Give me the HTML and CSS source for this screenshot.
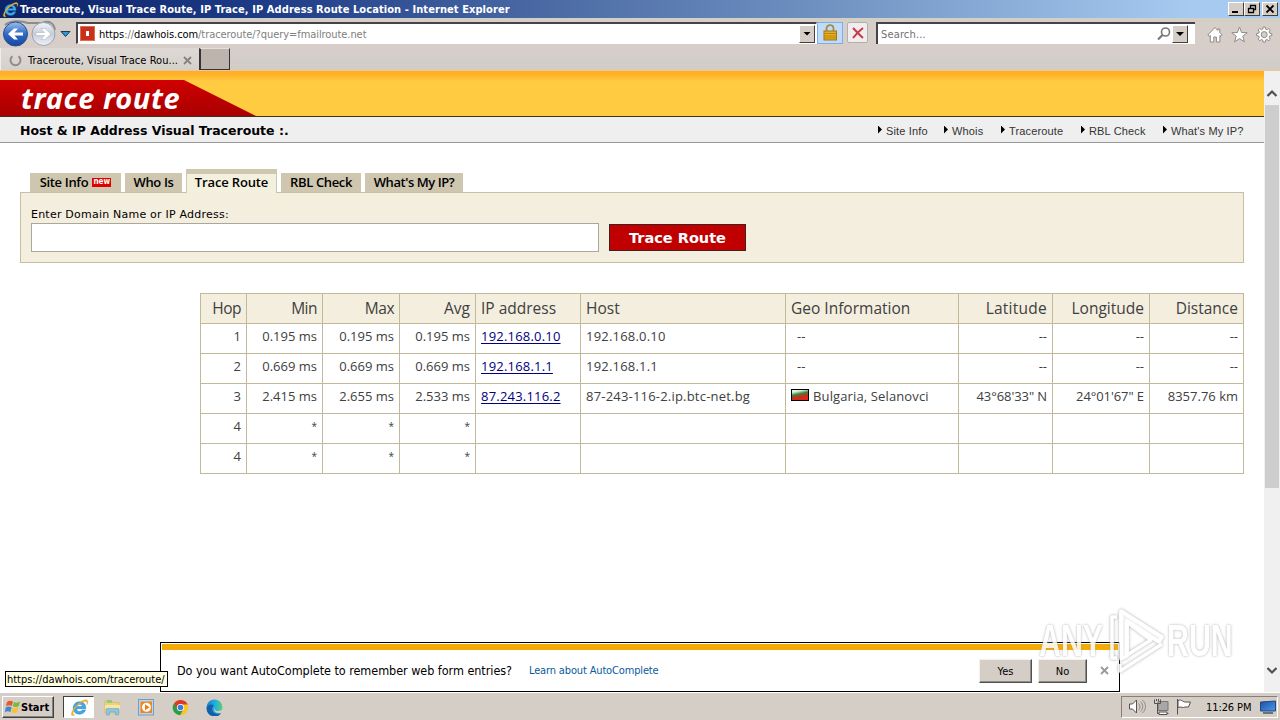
FILE: index.html
```html
<!DOCTYPE html>
<html lang="en">
<head>
<meta charset="utf-8">
<title>Traceroute, Visual Trace Route, IP Trace, IP Address Route Location</title>
<link rel="stylesheet" href="styles.css">
</head>
<body>
<svg width="0" height="0" class="defs">
  <defs>
    <linearGradient id="blueBall" x1="0" y1="0" x2="0" y2="1"><stop offset="0" stop-color="#9cc0ee"/><stop offset=".5" stop-color="#2f68c4"/><stop offset="1" stop-color="#1747a0"/></linearGradient>
    <linearGradient id="greyBall" x1="0" y1="0" x2="0" y2="1"><stop offset="0" stop-color="#f4f6fa"/><stop offset=".5" stop-color="#c6cbd8"/><stop offset="1" stop-color="#eef2fa"/></linearGradient>
    <linearGradient id="edgeFill" x1="0" y1="0" x2="1" y2="0"><stop offset="0" stop-color="#1280c8"/><stop offset=".6" stop-color="#27b4dc"/><stop offset="1" stop-color="#5fd069"/></linearGradient>
    <linearGradient id="flagFill" x1="0" y1="0" x2="0.35" y2="1"><stop offset="0" stop-color="#f4f4f4"/><stop offset=".25" stop-color="#dfeade"/><stop offset=".5" stop-color="#2f8a3c"/><stop offset=".72" stop-color="#c8301c"/><stop offset="1" stop-color="#d8281c"/></linearGradient>
    <linearGradient id="screenFill" x1="0" y1="0" x2="1" y2="1"><stop offset="0" stop-color="#1c4fa8"/><stop offset="1" stop-color="#4a9ae8"/></linearGradient>
    <symbol id="ie" viewBox="0 0 20 20">
      <path d="M16.600 11.200H6.800c.2 2 1.600 3 3.400 3 1.300 0 2.200-.5 2.700-1.500h3.400c-.9 2.800-3.200 4.300-6.200 4.300-4 0-6.700-2.500-6.700-6.400S6.200 4 10.100 4c4.100 0 6.700 2.700 6.500 7.200zM13.100 8.900C12.900 7.400 11.800 6.600 10.200 6.600S7.200 7.400 6.900 8.900z" fill="#3fa9ea" stroke="#1d74b8" stroke-width=".5"/>
      <path d="M5 17.800C1 20 .4 16.500 3.400 12 7 6.200 14.500.6 17.800 2c1.600.7 1.200 3-.2 5.200.6-2 .4-3.300-.8-3.600C13.600 3 8 7.200 5 11.800c-2 3-2.400 5.600 0 6z" fill="#f0b832" stroke="#c98a18" stroke-width=".3"/>
    </symbol>
  </defs>
</svg>

<header class="titlebar">
  <svg class="title-icon" width="17" height="17"><use href="#ie"/></svg>
  <span class="title-text">Traceroute, Visual Trace Route, IP Trace, IP Address Route Location - Internet Explorer</span>
  <div class="window-buttons">
    <span class="winbtn"><svg width="12" height="10"><path d="M2 8h6" stroke="#000" stroke-width="2"/></svg></span>
    <span class="winbtn"><svg width="12" height="10"><path d="M4.500 4V1.500h5v4H7.500M4 1.500h6M2.500 4.500h5v4h-5zM2 4.500h6" fill="none" stroke="#000" stroke-width="1.300"/></svg></span>
    <span class="winbtn close"><svg width="12" height="10"><path d="M2.500 1.500l7 7M9.500 1.500l-7 7" stroke="#000" stroke-width="1.800"/></svg></span>
  </div>
</header>

<nav class="navbar">
  <svg class="nav-arrows" width="76" height="28" viewBox="0 0 76 28">
    <path d="M5 6C10 1 21 1.500 28 4h14c7-3 12 0 13 7" fill="none" stroke="#8b8b91" stroke-width="2"/>
    <circle cx="15.500" cy="15" r="12" fill="url(#blueBall)" stroke="#284f8c" stroke-width="1"/>
    <path d="M23 13.500v3h-8.500l3.500 4h-4l-6-5.500 6-5.500h4l-3.500 4z" fill="#fff"/>
    <circle cx="43.500" cy="15" r="11.500" fill="url(#greyBall)" stroke="#9da1aa" stroke-width="1"/>
    <path d="M36 13.500v3h8.500l-3.500 4h4l6-5.500-6-5.500h-4l3.500 4z" fill="#fff" stroke="#b4b8c0" stroke-width=".6"/>
    <path d="M61 12.500h9l-4.500 5z" fill="#2e9ad2" stroke="#173c5a" stroke-width="1"/>
  </svg>
  <div class="address">
    <svg width="15" height="15"><rect width="15" height="15" fill="#c9301c"/><rect x=".5" y=".5" width="14" height="14" fill="none" stroke="#e06c4a"/><rect x="6" y="5" width="3" height="5" fill="#fff"/></svg>
    <span class="url"><b>https</b>://<b>dawhois.com</b>/traceroute/?query=fmailroute.net</span>
    <span class="dropbtn"><i></i></span>
  </div>
  <span class="lockbtn"><svg width="14" height="17"><path d="M3.500 8V4.500c0-4.500 7-4.500 7 0V8" fill="none" stroke="#a08c4c" stroke-width="1.800"/><rect x="1" y="7" width="12.500" height="9" fill="#e8b020" stroke="#9b7417"/><path d="M1.500 9.500h12M1.500 12h12M1.500 14h12" stroke="#b98512"/></svg></span>
  <span class="stopbtn"><svg width="12" height="12"><path d="M1 1c3 3 6 6.500 10 10M11 1C7 4 4 7 1 11" stroke="#c43c46" stroke-width="2" fill="none"/></svg></span>
  <div class="search">
    <span class="search-text">Search...</span>
    <svg width="14" height="14"><circle cx="8.500" cy="5" r="4" fill="none" stroke="#777" stroke-width="1.600"/><path d="M5.500 8L1 12.500" stroke="#777" stroke-width="2.200"/></svg>
    <span class="dropbtn"><i></i></span>
  </div>
  <svg class="tools" width="66" height="18" viewBox="0 0 66 18">
    <g fill="#fff" stroke="#8d8a88" stroke-width="1">
      <path d="M8 1.500L.8 9l1.400 1.300L3.300 9.500V16h3.500v-5h2.600v5h3.500V9.500l1.100.8L15.200 9l-2.400-2.500V3h-2v1.500z"/>
      <path d="M32.500 1l2.100 5.500 5.600.2-4.400 3.500 1.600 5.600-4.900-3.200-4.900 3.200 1.600-5.600-4.400-3.500 5.600-.2z"/>
      <path d="M56.200 1h2l.5 2.200 1.200.5 2-1.200 1.400 1.400-1.200 2 .5 1.200 2.200.5v2l-2.200.5-.5 1.200 1.200 2-1.400 1.400-2-1.200-1.200.5-.5 2.200h-2l-.5-2.200-1.200-.5-2 1.200-1.400-1.400 1.200-2-.5-1.200-2.200-.5v-2l2.200-.5.5-1.200-1.200-2 1.400-1.400 2 1.200 1.200-.5z"/>
      <circle cx="57.200" cy="8.600" r="3" fill="#d5cec9"/>
    </g>
  </svg>
</nav>

<div class="tabstrip">
  <div class="browser-tab">
    <svg width="13" height="13"><path d="M3.500 2.200a5 5 0 1 0 6 0" fill="none" stroke="#8e8c8a" stroke-width="2"/></svg>
    <span class="tab-title">Traceroute, Visual Trace Rou...</span>
    <svg class="tab-x" width="9" height="9"><path d="M1 1l7 7M8 1L1 8" stroke="#858280" stroke-width="1.800"/></svg>
  </div>
  <div class="new-tab"></div>
</div>

<div class="viewport">
  <main class="page">
    <div class="banner">
      <div class="logo"><span>trace route</span></div>
    </div>
    <div class="subhead">
      <h1>Host &amp; IP Address Visual Traceroute :.</h1>
      <ul class="links">
        <li class="l1">Site Info</li><li class="l2">Whois</li><li class="l3">Traceroute</li><li class="l4">RBL Check</li><li class="l5">What's My IP?</li>
      </ul>
    </div>
    <div class="site-tabs">
      <div class="stab t1"><span>Site Info</span><em>new</em></div>
      <div class="stab t2"><span>Who Is</span></div>
      <div class="stab t3 active"><span>Trace Route</span></div>
      <div class="stab t4"><span>RBL Check</span></div>
      <div class="stab t5"><span>What's My IP?</span></div>
    </div>
    <form class="panel">
      <label>Enter Domain Name or IP Address:</label>
      <div class="panel-row">
        <div class="field"></div>
        <div class="submit">Trace Route</div>
      </div>
    </form>
    <table class="hops">
      <colgroup><col class="c46"><col class="c76"><col class="c77"><col class="c76"><col class="c105"><col class="c205"><col class="c173"><col class="c94"><col class="c97"><col class="c94"></colgroup>
      <thead><tr><th class="r tight">Hop</th><th class="r tight">Min</th><th class="r tight">Max</th><th class="r">Avg</th><th>IP address</th><th>Host</th><th>Geo Information</th><th class="r wide">Latitude</th><th class="r">Longitude</th><th class="r">Distance</th></tr></thead>
      <tbody>
        <tr><td class="r">1</td><td class="r">0.195 ms</td><td class="r">0.195 ms</td><td class="r">0.195 ms</td><td class="name"><a>192.168.0.10</a></td><td class="name">192.168.0.10</td><td class="dash">--</td><td class="r">--</td><td class="r">--</td><td class="r">--</td></tr>
        <tr><td class="r">2</td><td class="r">0.669 ms</td><td class="r">0.669 ms</td><td class="r">0.669 ms</td><td class="name"><a>192.168.1.1</a></td><td class="name">192.168.1.1</td><td class="dash">--</td><td class="r">--</td><td class="r">--</td><td class="r">--</td></tr>
        <tr><td class="r">3</td><td class="r">2.415 ms</td><td class="r">2.655 ms</td><td class="r">2.533 ms</td><td class="name"><a>87.243.116.2</a></td><td class="name">87-243-116-2.ip.btc-net.bg</td><td><svg class="flag" width="18" height="12"><rect x=".5" y=".5" width="17" height="11" fill="url(#flagFill)" stroke="#000"/></svg><span class="geo">Bulgaria, Selanovci</span></td><td class="r coord">43°68'33" N</td><td class="r coord">24°01'67" E</td><td class="r">8357.76 km</td></tr>
        <tr><td class="r">4</td><td class="r star">*</td><td class="r star">*</td><td class="r star">*</td><td></td><td></td><td></td><td></td><td></td><td></td></tr>
        <tr><td class="r">4</td><td class="r star">*</td><td class="r star">*</td><td class="r star">*</td><td></td><td></td><td></td><td></td><td></td><td></td></tr>
      </tbody>
    </table>
  </main>
  <aside class="scrollbar">
    <svg width="16" height="34"><path d="M3.500 25l4.500-4.500 4.500 4.500" fill="none" stroke="#505050" stroke-width="2.200"/></svg>
    <div class="thumb"></div>
    <svg class="down" width="16" height="30"><path d="M3.500 6l4.500 4.500L12.500 6" fill="none" stroke="#505050" stroke-width="2.200"/></svg>
  </aside>
  <div class="notice">
    <div class="notice-bar"></div>
    <div class="notice-row">
      <span class="question">Do you want AutoComplete to remember web form entries?</span>
      <span class="learn">Learn about AutoComplete</span>
      <span class="btn yes">Yes</span>
      <span class="btn no">No</span>
      <svg class="dismiss" width="9" height="9"><path d="M1 1l7 7M8 1L1 8" stroke="#999" stroke-width="1.800"/></svg>
    </div>
  </div>
  <div class="status-tip"><span>https://dawhois.com/traceroute/</span></div>
  <div class="watermark">
    <span class="wm-any">ANY</span>
    <svg width="60" height="70" viewBox="0 0 60 70"><g class="wm-mark" fill="none" stroke="#fff" stroke-width="3.500" stroke-linejoin="round"><path d="M14 5l41 26-3 5L20 15v35l-6 3z" fill="#f0f0f0"/><path d="M10 11H5v41h5M14 5v47M14 5l41 26M20 16v33l24-15zM13 58v7l42-27"/></g></svg>
    <span class="wm-run">RUN</span>
  </div>
</div>

<footer class="taskbar">
  <div class="start"><svg width="16" height="16" viewBox="0 0 16 16"><path d="M2 3c2-2 4-1.500 6-.5L6.800 7C5 6 3 6 1 7.300z" fill="#e8582a"/><path d="M9 3c2 1 4 1 6-.7L13.800 7c-2 1.500-4 1-6 .2z" fill="#7cb83c"/><path d="M.8 8.500c2-1.500 4-1.300 5.800-.3L5.400 13c-2-1-4-1-5.600.4z" fill="#3d86d8"/><path d="M7.500 8.500c2 1 4 1 6-.5l-1.200 5c-2 1.500-4 1.200-6 .2z" fill="#f8c22c"/></svg><span>Start</span></div>
  <div class="task-active"><svg width="19" height="19"><use href="#ie"/></svg></div>
  <div class="quick">
    <svg width="17" height="17" viewBox="0 0 17 17"><path d="M1 2h5l1 1.500h8V14H1z" fill="#f0d27a" stroke="#d8b050" stroke-width=".6"/><path d="M3 1h5v3H3z" fill="#8fcb7a"/><path d="M1 6h15v4H1z" fill="#f8e6a4"/><path d="M2.500 16V9.500h12V16h-3v-3h-6v3z" fill="#8cc4e4" stroke="#5a9cc4" stroke-width=".5"/></svg>
    <svg width="17" height="17" viewBox="0 0 17 17"><rect x=".5" y=".5" width="15" height="15.500" fill="#b8d4ee" stroke="#6f9dc8"/><rect x="2.500" y="2.500" width="11.500" height="11.500" fill="#f5851a"/><circle cx="8.500" cy="8.300" r="4.500" fill="#fff"/><path d="M7 5.300v6l4.500-3z" fill="#f07810"/></svg>
    <svg width="17" height="17" viewBox="0 0 17 17"><circle cx="8.500" cy="8.500" r="7.800" fill="#f9c623"/><path d="M8.500 8.500L1.700 4.700A7.800 7.800 0 0 0 8 16.300l3.500-6z" fill="#2e9c4a"/><path d="M2 4.500l4.500 6L8 5.500h7.700A7.800 7.800 0 0 0 2 4.500z" fill="#dc3a2c"/><circle cx="8.500" cy="8.500" r="3.600" fill="#fff"/><circle cx="8.500" cy="8.500" r="2.800" fill="#3a7be0"/></svg>
    <svg width="17" height="17" viewBox="0 0 17 17"><circle cx="8.500" cy="8.500" r="8" fill="url(#edgeFill)"/><path d="M.6 9.500C1 6 5 4.500 8 6.500c-3 2-2.600 8 3.500 8.200 2 0 3-.6 4-1.200A8 8 0 0 1 .6 9.500z" fill="#135fae"/><path d="M9 8c-1.500 2 0 4 3 4 2 0 3.500-.8 4.500-2L17 13l-2 1c-4 1-8-1.500-6.800-5z" fill="#d5cec6"/></svg>
  </div>
  <div class="tray">
    <svg width="66" height="18" viewBox="0 0 66 18">
      <g fill="#fff" stroke="#55524f" stroke-width="1">
        <path d="M1.500 6h3l4-4v13l-4-4h-3z"/><path d="M10.500 5.500c2 2 2 4.500 0 6.500M12.500 3.500c3 3 3 7 0 10M14.500 2c4 4 4 9 0 13" fill="none" stroke="#8c8986"/>
        <path d="M30 3.500h10v9H30z" fill="#a9a7a5" stroke="#777"/><path d="M26.500 1.500v4h6v-4M28.500 1v2M30.500 1v2M29.500 6v9.500h11" fill="none"/><path d="M31 14h8v2.500h-8z"/>
        <path d="M49.500 1v15.500M50 2.500c4-1.500 5 2 8 1.500h4.500l-2 5H57c-2 1.500-4-1-7 .5z"/>
      </g>
    </svg>
    <span class="clock">11:26 PM</span>
    <svg width="16" height="14" viewBox="0 0 16 14"><path d="M.5 2l15-1v10H.5z" fill="url(#screenFill)" stroke="#26477c"/><path d="M3 13h10" stroke="#456" stroke-width="1.500"/></svg>
  </div>
</footer>
</body>
</html>
```
FILE: styles.css
```css
* { box-sizing: border-box; }
body {
  margin: 0; width: 1280px; height: 720px; overflow: hidden;
  display: flex; flex-direction: column; background: #d5cec9;
  font-family: "DejaVu Sans Condensed", "DejaVu Sans", sans-serif; font-stretch: condensed; font-size: 11px;
  white-space: nowrap; color: #000;
}
svg { display: block; flex: none; }
span { flex: none; }
.defs { position: absolute; }

.titlebar { height: 18px; flex: none; display: flex; align-items: center; padding: 0 2px 0 2px; background: linear-gradient(90deg, #0c2368 0, #1c3a86 20%, #4a69a4 42%, #7093c2 65%, #a6caf0 93%); }
.title-text { margin-left: 1px; color: #fff; font-weight: bold; font-size: 11px; letter-spacing: 0.08px; }
.window-buttons { margin-left: auto; display: flex; }
.winbtn { width: 16px; height: 14px; background: #d5cec6; border: 1px solid; border-color: #fff #404040 #404040 #fff; padding: 1px; }
.winbtn.close { margin-left: 2px; }

.navbar { height: 30px; flex: none; display: flex; background: linear-gradient(#d2cfc4, #d7cec9 8px); }
.nav-arrows { margin-top: 1px; }
.address { width: 741px; height: 22px; margin-top: 4px; background: #fff; border: 1px solid #fff; border-top: 2px solid #48404a; border-left: 2px solid #48404a; display: flex; align-items: center; padding-left: 2px; }
.url { margin: 2px 0 0 4px; color: #808080; letter-spacing: -0.07px; }
.url b { color: #000; font-weight: normal; }
.dropbtn { margin-left: auto; width: 16px; height: 18px; background: #d5cec6; border: 1px solid; border-color: #fff #404040 #404040 #fff; padding: 6px 0 0 3px; }
.address .dropbtn { margin-right: 1px; }
.dropbtn i { display: block; width: 8px; height: 4px; background: #000; clip-path: polygon(0 0, 100% 0, 50% 100%); }
.lockbtn { width: 26px; height: 22px; margin: 4px 0 0 0; background: #c2dcf8; border: 1px solid #7caeee; padding: 1px 0 0 5px; }
.stopbtn { width: 21px; height: 21px; margin: 4px 0 0 4px; background: #f1edee; border: 1px solid #b4aeae; border-radius: 2px; padding: 4px 0 0 4px; }
.search { width: 319px; height: 22px; margin: 4px 0 0 8px; background: #fff; border-top: 2px solid #48404a; border-left: 2px solid #48404a; display: flex; align-items: center; padding-right: 7px; }
.search-text { margin-left: 3px; color: #707070; flex: 1; letter-spacing: 0.15px; }
.search .dropbtn { margin-left: 1px; }
.tools { margin: 8px 0 0 12px; }

.tabstrip { height: 23px; flex: none; display: flex; background: linear-gradient(#d7cdc9, #d0cdc8 20px, #e6c9a4 22px); }
.browser-tab { width: 199px; height: 22px; display: flex; align-items: center; padding: 2px 0 0 8px; background: linear-gradient(#ded9d4, #d6d0cb); border-left: 1px solid #eee; }
.tab-title { margin-left: 6px; width: 151px; letter-spacing: 0.05px; }
.tab-x { margin-left: 4px; }
.new-tab { width: 31px; height: 22px; background: #bcb4ad; border: 1px solid; border-width: 1px 1px 1px 2px; border-color: #e6e0dc #38303a #38303a #38303a; }

.viewport { position: relative; height: 621px; flex: none; display: flex; background: #fff; }
.page { width: 1264px; display: flex; flex-direction: column; }
.banner { height: 46px; flex: none; border-bottom: 1px solid #40301c; background: linear-gradient(#ffae20, #ffb22a 4px, #ffcb40 10px, #ffcb40 40px, #ffcb40); padding-top: 9px; }
.logo { width: 256px; height: 36px; background: linear-gradient(#d00000, #a80000); clip-path: polygon(0 0, 184px 0, 100% 100%, 0 100%); color: #fff; padding-left: 21px; }
.logo span { display: block; font: italic bold 29px/36px "Noto Sans", sans-serif; letter-spacing: 0.6px; }
.subhead { height: 26px; flex: none; background: #efefef; border-bottom: 1px solid #989898; display: flex; align-items: center; padding-left: 20px; }
h1 { margin: 2px 0 0; font: bold 12.5px/25px "DejaVu Sans", sans-serif; letter-spacing: 0; }
.links { list-style: none; margin: 2px 0 0 auto; padding: 0; display: flex; font: 11px/22px "Liberation Sans", sans-serif; letter-spacing: 0.15px; color: #333; }
.links li { display: flex; }
.links li::before { content: ""; width: 4px; height: 8px; margin: 6px 4px 0 0; background: #000; clip-path: polygon(0 0, 100% 50%, 0 100%); }
.l1 { width: 66px; } .l2 { width: 57px; } .l3 { width: 80px; } .l4 { width: 82px; } .l5 { width: 101px; }

.site-tabs { height: 50px; flex: none; display: flex; align-items: flex-end; gap: 4px; padding: 0 0 1px 30px; }
.stab { height: 19px; background: #cfc6b0; display: flex; align-items: center; justify-content: center; font: 600 13px/19px "Open Sans", sans-serif; }
.stab span { letter-spacing: -0.35px; }
.stab.active { height: 24px; margin-bottom: -1px; background: #f4f0de; border-top: 5px solid #cfc6b0; border-left: 1px solid #cfc6b0; border-right: 1px solid #cfc6b0; padding-bottom: 2px; z-index: 1; }
.t3 span { letter-spacing: -0.15px; }
.t5 span { letter-spacing: -0.45px; }
.stab em { margin-left: 4px; width: 19px; height: 9px; background: #e00000; color: #fff; font: bold 8px/8px "DejaVu Sans Condensed", sans-serif; text-align: center; }
.t1 { width: 91px; } .t2 { width: 57px; } .t3 { width: 91px; } .t4 { width: 80px; } .t5 { width: 98px; }
.panel { width: 1224px; height: 71px; flex: none; margin: -1px 0 0 20px; background: #f4eedf; border: 1px solid #c5bfa6; padding: 14px 10px 0; }
label { display: block; font: 11px/16px "DejaVu Sans", sans-serif; letter-spacing: 0.22px; }
.panel-row { display: flex; gap: 10px; align-items: center; }
.field { width: 568px; height: 29px; background: #fff; border: 1px solid #a8a8a0; }
.submit { width: 137px; height: 27px; background: #c00000; border: 1px solid #402020; color: #fff; font: bold 14.5px/26px "DejaVu Sans", sans-serif; text-align: center; }

.hops { width: 1044px; margin: 30px 0 0 200px; table-layout: fixed; border-collapse: separate; border-spacing: 0; border: solid #c0b99a; border-width: 1px 0 0 1px; font: 13px/16px "Open Sans", sans-serif; color: #404040; }
.hops th { height: 30px; padding: 0 5px; background: #f4eedf; border: solid #c0b99a; border-width: 0 1px 1px 0; font: 15.500px/29px "Open Sans", sans-serif; text-align: left; letter-spacing: 0; }
.hops th.tight { letter-spacing: -0.5px; }
.hops th.wide { letter-spacing: 0.25px; }
.hops td { height: 30px; padding: 4px 5px 0; border: solid #c0b99a; border-width: 0 1px 1px 0; vertical-align: top; }
.hops .r { text-align: right; }
.hops .name { letter-spacing: 0.2px; }
.hops .coord { letter-spacing: -0.08px; }
.hops .star { font-size: 10px; }
.hops .dash { padding-left: 11px; }
.hops a { color: #000080; text-decoration: underline; text-underline-offset: 2px; }
.flag { display: inline-block; margin-right: 4px; vertical-align: 0; }
.geo { letter-spacing: 0.13px; }
.c46 { width: 46px; } .c76 { width: 76px; } .c77 { width: 77px; } .c105 { width: 105px; } .c205 { width: 205px; } .c173 { width: 173px; } .c94 { width: 94px; } .c97 { width: 97px; }

.scrollbar { width: 16px; background: #f0f0f0; display: flex; flex-direction: column; }
.thumb { margin-left: 1px; width: 14px; height: 383px; background: #cdcdcd; }
.down { margin-top: auto; }

.notice { position: absolute; left: 160px; top: 571px; width: 960px; height: 50px; background: #fff; border: 1px solid #000; padding: 1px; }
.notice-bar { height: 6px; background: #f5ab05; }
.notice-row { height: 41px; display: flex; align-items: center; padding-left: 15px; }
.question { width: 352px; font-size: 12.5px; letter-spacing: -0.04px; }
.learn { width: 450px; color: #0a5aa0; letter-spacing: -0.15px; }
.btn { height: 24px; background: #d5cec6; border: 1px solid; border-color: #f4f0ec #505050 #505050 #f4f0ec; box-shadow: inset -1px -1px #908c88; line-height: 23px; text-align: center; }
.yes { width: 53px; } .no { width: 49px; margin-left: 6px; } .dismiss { margin-left: 13px; }
.status-tip { position: absolute; left: 5px; top: 600px; width: 163px; height: 16px; background: #ffffe1; border: 1px solid #000; line-height: 15px; padding-left: 1px; letter-spacing: -0.04px; }
.watermark { position: absolute; left: 1039px; top: 535px; display: flex; align-items: center; opacity: .85; font: bold 44px/70px "Liberation Sans", sans-serif; color: #fff; text-shadow: 0 0 3px #999; }
.wm-any { width: 68px; }
.wm-any, .wm-run { transform-origin: left; transform: scaleX(.69); }
.wm-mark { filter: drop-shadow(0 0 1.5px #999); }

.taskbar { height: 28px; flex: none; display: flex; align-items: center; background: #d5cec6; border-top: 1px solid #fff; padding: 1px 2px 0; }
.start { width: 52px; height: 22px; border: 1px solid; border-color: #fff #404040 #404040 #fff; box-shadow: inset -1px -1px #88827c; display: flex; align-items: center; padding-left: 2px; font-weight: bold; }
.task-active { width: 31px; height: 22px; margin-left: 9px; background: #fff; border: 1px solid; border-color: #404040 #fff #fff #404040; padding: 1px 0 0 6px; }
.quick { display: flex; margin-left: 10px; gap: 17px; }
.tray { width: 157px; height: 22px; margin-left: auto; border: 1px solid; border-color: #85807c #fff #fff #85807c; display: flex; align-items: center; padding-left: 6px; }
.clock { width: 54px; margin-left: 12px; letter-spacing: -0.1px; }
```
